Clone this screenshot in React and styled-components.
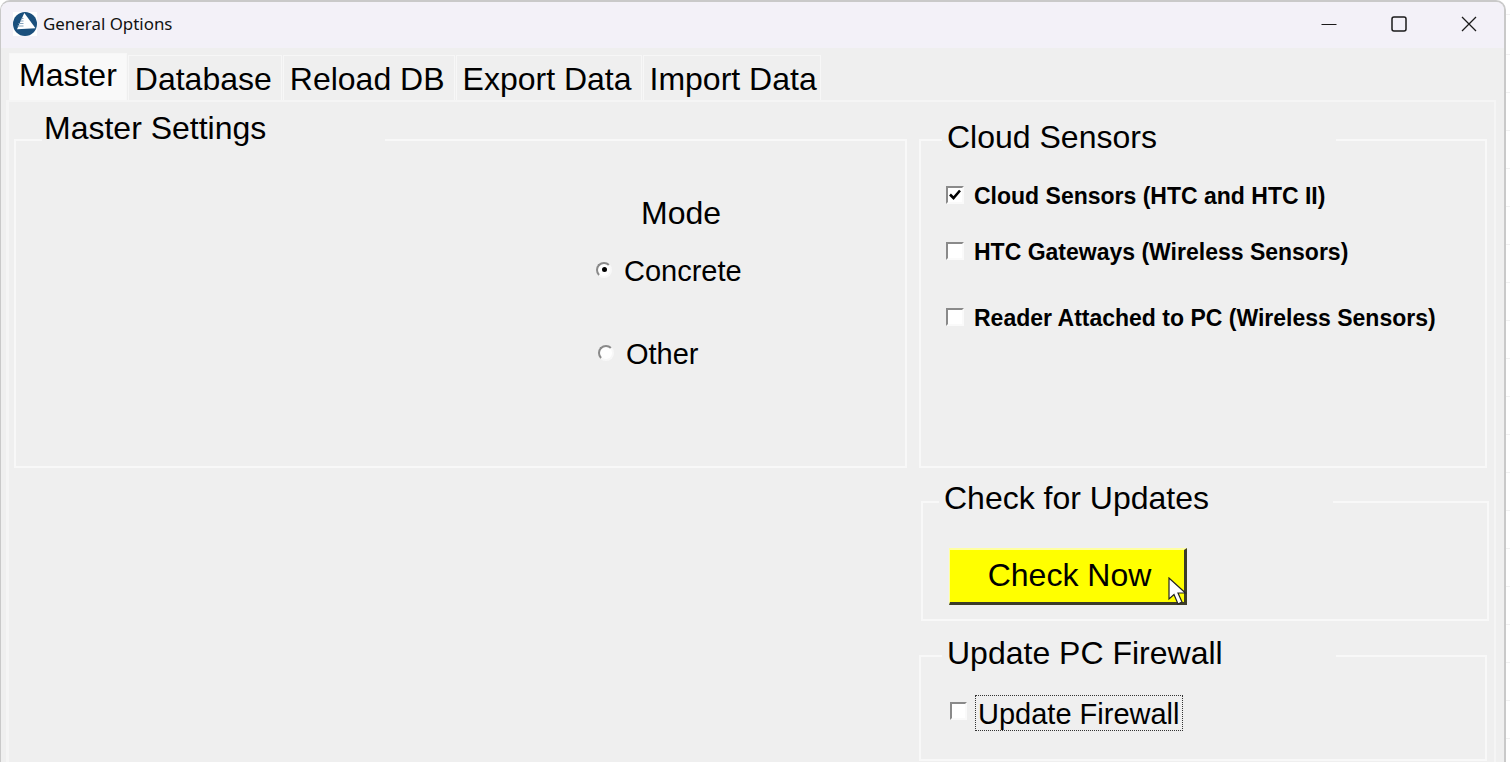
import React from 'react'
import styled, { createGlobalStyle } from 'styled-components'

const Global = createGlobalStyle`
  html, body { margin:0; padding:0; height:100%; overflow:hidden; }
  body {
    background: repeating-linear-gradient(to bottom, #fff 0, #fff 37px, #f1f1f1 37px, #f1f1f1 38px);
    background-position: 0 17px;
    font-family: "Liberation Sans", Arial, sans-serif;
    color:#000;
  }
`

const Window = styled.div`
  width:1506px; height:762px;
  box-sizing:border-box;
  background:#efefef;
  border:2px solid #c9c9c9;
  border-bottom:none;
  border-left-width:1px;
  border-radius:10px 10px 0 0;
  overflow:hidden;
  display:flex;
  flex-direction:column;
`

const TitleBar = styled.div`
  height:46px;
  flex:none;
  background:#f3f1f8;
  display:flex;
  align-items:center;
  padding-left:12px;
`

const AppLogo = styled.svg`
  width:24px; height:24px;
  flex:none;
  margin-top:-2px;
`

const TitleText = styled.div`
  font-family:"Noto Sans", sans-serif;
  font-size:16.9px;
  margin-left:6px;
  margin-top:-4px;
  color:#111;
`

const WinButtons = styled.div`
  margin-left:auto;
  display:flex;
  margin-top:-2px;
  margin-right:27px;
`

const WinButton = styled.svg`
  width:16px; height:16px;
  margin-left:54px;
  display:block;
  fill:none;
  stroke:#1a1a1a;
`

const TabStrip = styled.div`
  display:flex;
  align-items:flex-end;
  height:52px;
  flex:none;
  padding-left:8px;
`

const Tab = styled.div`
  height:${p => p.$active ? 47 : 45}px;
  box-sizing:border-box;
  padding:${p => p.$active ? '0 9px 4px 9px' : `2px ${p.$right || 9}px 0 6px`};
  margin-left:${p => p.$active ? 0 : 1}px;
  display:flex;
  align-items:center;
  font-size:32px;
  background:${p => p.$active ? '#f9f9f9' : '#efefef'};
  border:1px solid #f7f7f7;
  border-bottom:none;
`

const Panel = styled.div`
  flex:1;
  margin-left:5px;
  width:1490px;
  box-sizing:border-box;
  border:2px solid #f5f5f5;
  border-bottom:none;
  border-left-width:3px;
  padding:37px 0 0 5px;
  display:grid;
  grid-template-columns:893px 570px;
  column-gap:12px;
  align-items:start;
`

const Column = styled.div`
  display:flex;
  flex-direction:column;
`

const Group = styled.div`
  box-sizing:border-box;
  height:${p => p.$h}px;
  margin-top:${p => p.$top || 0}px;
  margin-left:${p => p.$left || 0}px;
  width:${p => p.$w || 568}px;
  border:2px solid #f8f8f8;
`

const Legend = styled.div`
  height:36px;
  line-height:36px;
  font-size:32px;
  white-space:nowrap;
  background:#efefef;
  box-sizing:border-box;
  width:${p => p.$w}px;
  margin-top:${p => p.$up}px;
  margin-left:${p => p.$left}px;
  padding-left:${p => p.$pad}px;
`

const ModeBox = styled.div`
  margin:49px 0 0 580px;
  display:flex;
  flex-direction:column;
`

const ModeTitle = styled.div`
  font-size:32px;
  line-height:36px;
  padding-left:45px;
`

const RadioRow = styled.div`
  display:flex;
  align-items:center;
  height:36px;
  font-size:29px;
  margin-top:${p => p.$top}px;
  padding-left:${p => p.$indent || 0}px;
`

const Radio = styled.span`
  width:16px; height:16px;
  flex:none;
  box-sizing:border-box;
  margin-right:12px;
  margin-top:-3px;
  border-radius:50%;
  background:#fff;
  border:2px solid;
  border-color:#8a8a8a #f8f8f8 #f8f8f8 #8a8a8a;
  display:flex;
  align-items:center;
  justify-content:center;
  &::after {
    content:"";
    width:5px; height:5px;
    border-radius:50%;
    background:${p => p.$on ? '#000' : 'transparent'};
  }
`

const CloudList = styled.div`
  padding-left:25px;
  display:flex;
  flex-direction:column;
`

const CheckRow = styled.div`
  display:flex;
  align-items:center;
  height:32px;
  margin-top:${p => p.$top}px;
  font-size:23px;
  font-weight:bold;
  white-space:nowrap;
`

const CheckBox = styled.span`
  width:18px; height:18px;
  flex:none;
  box-sizing:border-box;
  margin-right:10px;
  margin-top:-3px;
  background:#fff;
  border:2px solid;
  border-color:#8a8a8a #fafafa #fafafa #8a8a8a;
  display:flex;
  align-items:center;
  justify-content:center;
`

const CheckMark = styled.svg`
  width:12px; height:11px;
  fill:none;
  stroke:#000;
  stroke-width:2.6;
`

const YellowButton = styled.div`
  position:relative;
  margin:32px 0 0 26px;
  width:238px; height:57px;
  box-sizing:border-box;
  background:#ffff00;
  border-top:2px solid #ffffa0;
  border-left:1px solid #ffffa0;
  border-right:3px solid #3c3c28;
  border-bottom:3px solid #3c3c28;
  display:flex;
  align-items:center;
  justify-content:center;
  font-size:32px;
  padding:0 0 2px 5px;
`

const Cursor = styled.svg`
  position:absolute;
  left:218px; top:27px;
  width:19px; height:29px;
`

const FirewallRow = styled.div`
  display:flex;
  align-items:center;
  margin:24px 0 0 29px;
`

const SmallCheck = styled(CheckBox)`
  width:17px; height:18px;
  margin-right:8px;
  margin-top:-4px;
`

const FocusLabel = styled.div`
  height:36px;
  line-height:36px;
  box-sizing:border-box;
  border:1px dotted #333;
  padding:0 3px 0 2px;
  font-size:29px;
  white-space:nowrap;
`

export default function App() {
  return (
    <Window>
      <Global />
      <TitleBar>
        <AppLogo viewBox="0 0 24 24">
          <rect width="24" height="24" fill="#fff" />
          <circle cx="12" cy="12" r="12" fill="#1a4f7c" />
          <path d="M11.3 1 L22.5 16.2 L4 17.2 Z" fill="#fff" />
          <path d="M10.5 6.5h-2M10.5 9h-3.5M10.5 11.5h-5M10.5 14h-6" stroke="#86a3bc" strokeWidth="1.1" />
        </AppLogo>
        <TitleText>General Options</TitleText>
        <WinButtons>
          <WinButton viewBox="0 0 16 16"><path d="M0.5 8.5h15" strokeWidth="1.2" /></WinButton>
          <WinButton viewBox="0 0 16 16"><rect x="1" y="1" width="14" height="14" rx="2" strokeWidth="1.5" /></WinButton>
          <WinButton viewBox="0 0 16 16"><path d="M1 1l14 14M15 1L1 15" strokeWidth="1.3" /></WinButton>
        </WinButtons>
      </TitleBar>

      <TabStrip>
        <Tab $active>Master</Tab>
        <Tab>Database</Tab>
        <Tab>Reload DB</Tab>
        <Tab>Export Data</Tab>
        <Tab $right={3}>Import Data</Tab>
      </TabStrip>

      <Panel>
        <Group $h={329} $w={893}>
          <Legend $up={-31} $left={26} $pad={2} $w={343}>Master Settings</Legend>
          <ModeBox>
            <ModeTitle>Mode</ModeTitle>
            <RadioRow $top={22}><Radio $on />Concrete</RadioRow>
            <RadioRow $top={47} $indent={2}><Radio />Other</RadioRow>
          </ModeBox>
        </Group>

        <Column>
          <Group $h={329}>
            <Legend $up={-22} $left={21} $pad={5} $w={394}>Cloud Sensors</Legend>
            <CloudList>
              <CheckRow $top={25}>
                <CheckBox>
                  <CheckMark viewBox="0 0 12 11"><path d="M1 5.5 L4.5 9 L11 1.5" /></CheckMark>
                </CheckBox>
                Cloud Sensors (HTC and HTC II)
              </CheckRow>
              <CheckRow $top={24}><CheckBox />HTC Gateways (Wireless Sensors)</CheckRow>
              <CheckRow $top={34}><CheckBox />Reader Attached to PC (Wireless Sensors)</CheckRow>
            </CloudList>
          </Group>

          <Group $h={120} $top={33} $left={2}>
            <Legend $up={-23} $left={16} $pad={5} $w={394}>Check for Updates</Legend>
            <YellowButton>
              Check Now
              <Cursor viewBox="0 0 19 29">
                <path d="M1 1 L1 22 L6 17.5 L10 27 L14 25 L10 16 L17.5 16 Z" fill="#fff" stroke="#222" strokeWidth="1.2" />
              </Cursor>
            </YellowButton>
          </Group>

          <Group $h={106} $top={34}>
            <Legend $up={-22} $left={21} $pad={5} $w={394}>Update PC Firewall</Legend>
            <FirewallRow>
              <SmallCheck />
              <FocusLabel>Update Firewall</FocusLabel>
            </FirewallRow>
          </Group>
        </Column>
      </Panel>
    </Window>
  )
}
